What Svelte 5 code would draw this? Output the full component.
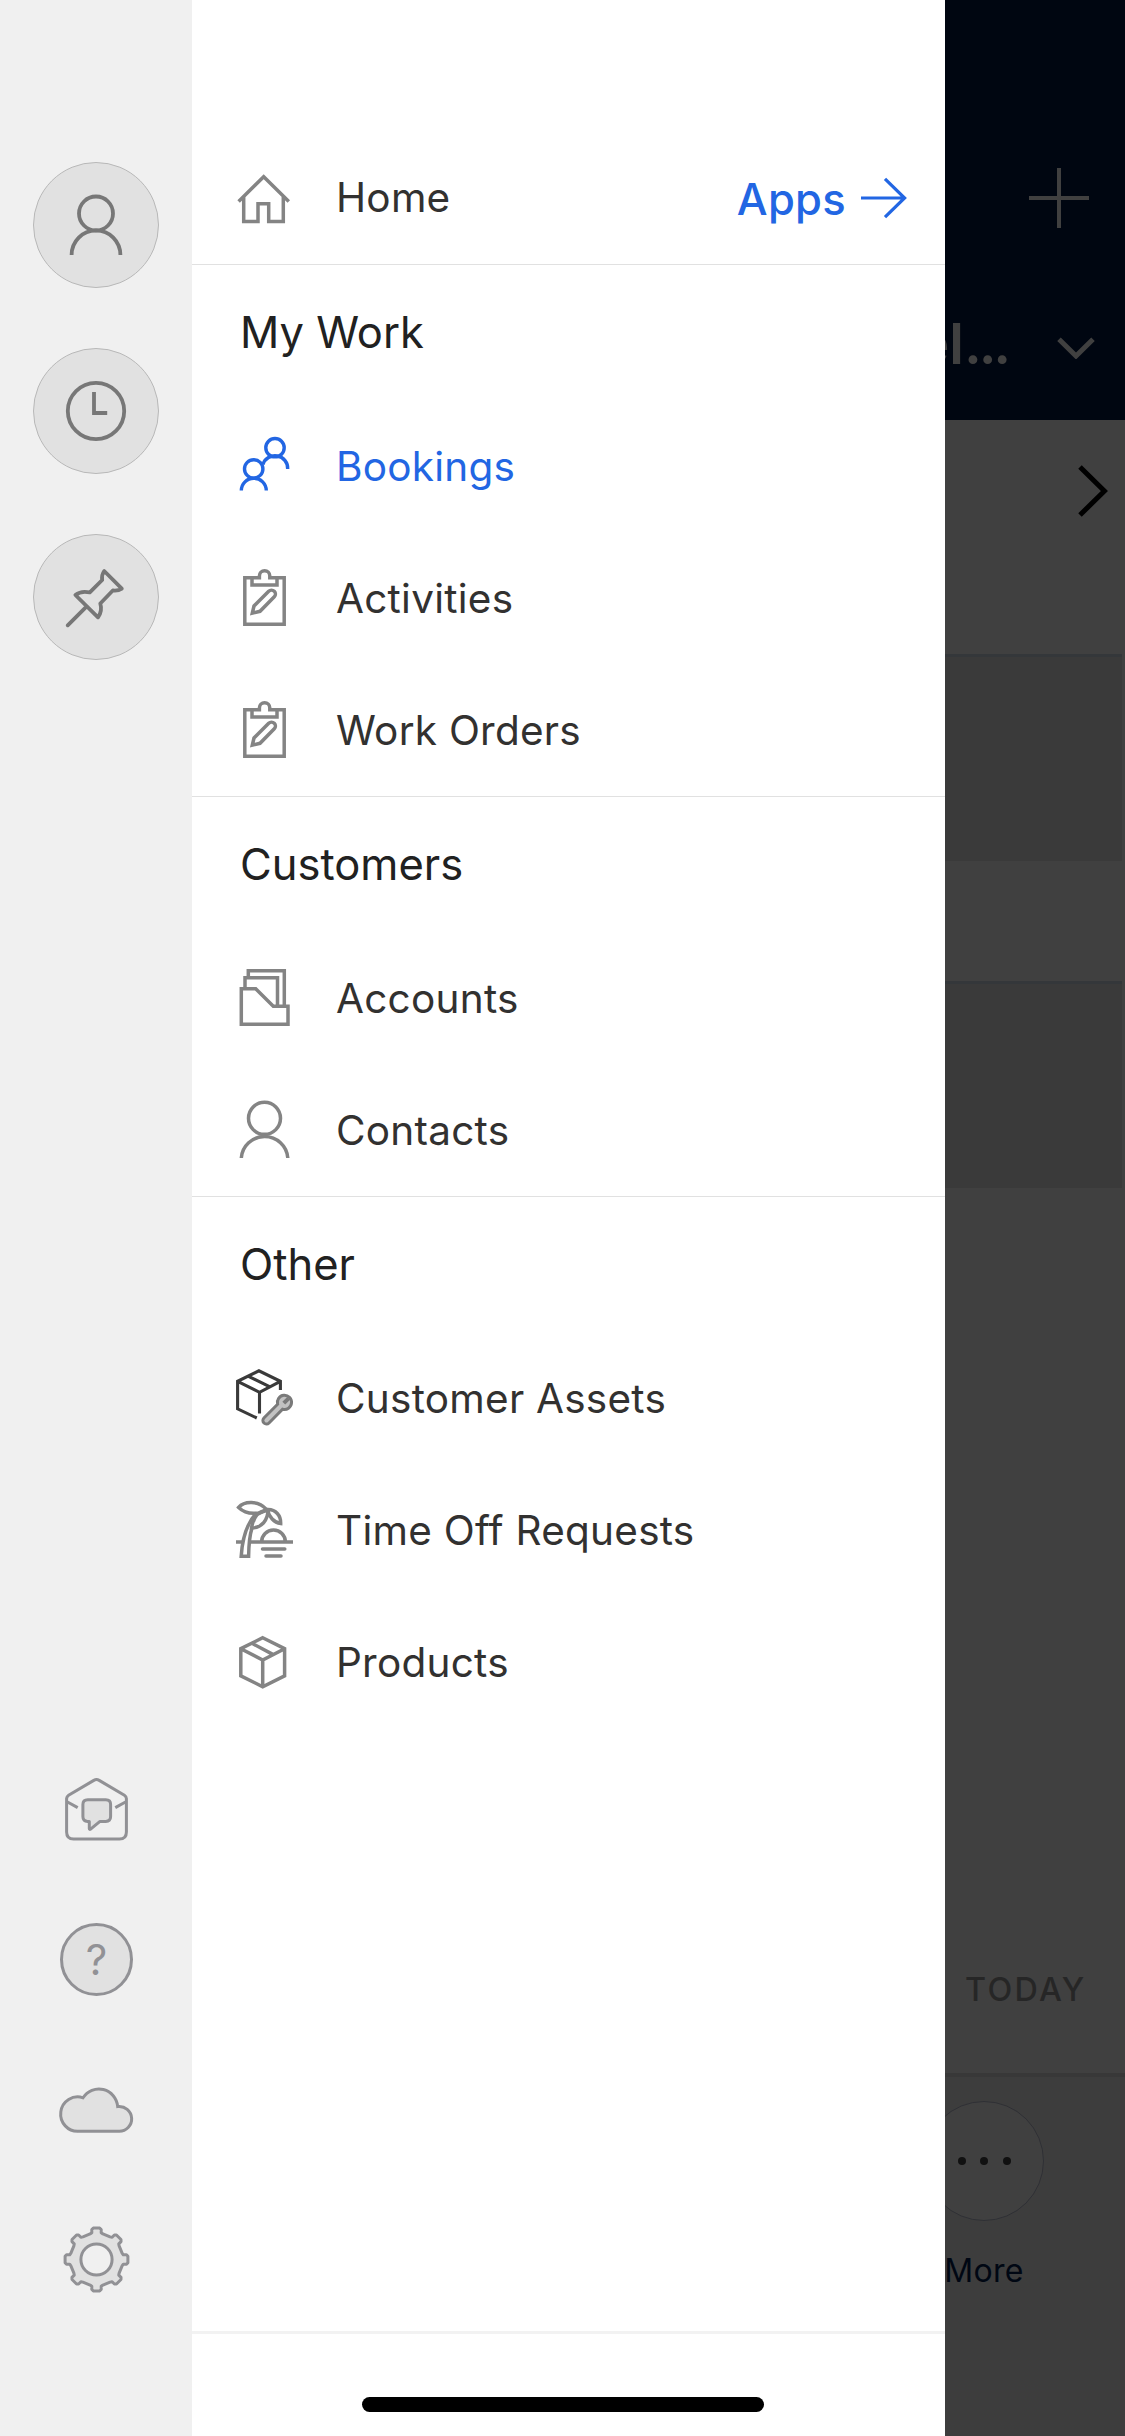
<script>
  const sections = [
    {
      title: 'My Work',
      items: [
        { label: 'Bookings', icon: 'people', active: true },
        { label: 'Activities', icon: 'clipboard' },
        { label: 'Work Orders', icon: 'clipboard' }
      ]
    },
    {
      title: 'Customers',
      items: [
        { label: 'Accounts', icon: 'folder' },
        { label: 'Contacts', icon: 'person' }
      ]
    },
    {
      title: 'Other',
      items: [
        { label: 'Customer Assets', icon: 'asset' },
        { label: 'Time Off Requests', icon: 'palm' },
        { label: 'Products', icon: 'box' }
      ]
    }
  ];

  // Eight-toothed gear outline around the origin.
  const gear = Array.from({ length: 8 }, (_, i) => {
    const a = (i * Math.PI) / 4;
    const pts = [[-6.4, -25.6], [-4.7, -26.8], [-4.7, -30], [-3.2, -31.4], [3.2, -31.4], [4.7, -30], [4.7, -26.8], [6.4, -25.6]];
    return pts.map(([x, y]) =>
      `${(x * Math.cos(a) - y * Math.sin(a)).toFixed(2)} ${(x * Math.sin(a) + y * Math.cos(a)).toFixed(2)}`
    ).join(' L');
  }).join(' L');
</script>

{#snippet icon(name)}
  <svg class="icon" viewBox="0 0 72 72" width="72" height="72">
    {#if name === 'home'}
      <path d="M10.6 39.4 L35.7 14.7 L60.8 39.4 M15.7 35 V59.6 H30 V41.7 H40.7 V59.6 H55.3 V35" />
    {:else if name === 'people'}
      <circle cx="47" cy="16.7" r="9.2" />
      <path d="M59.7 38 A12.7 12.4 0 0 0 34.9 33.5" />
      <circle cx="25.7" cy="37.9" r="9.2" />
      <path d="M13.3 59.6 A12.5 12.4 0 0 1 38.3 59.6" />
    {:else if name === 'clipboard'}
      <path d="M31.2 14.8 H16.8 V61.2 H56.2 V14.8 H41.8 V13 A5.2 5.2 0 0 0 31.4 13 V16.4 M24 14.8 V22 H49 V14.8 M41.8 16.4 V13" />
      <path d="M24.3 50.2 L26 43 L40.7 28.3 A3.6 3.6 0 0 1 46.3 33.8 L32 48.3 Z" />
    {:else if name === 'folder'}
      <path d="M20.3 14 V7.7 H56.3 V43 M17 25.5 V14.8 H49.5 V43 M13.3 25.7 H27.7 L45.3 43.3 H60 V61.3 H13.3 Z" />
    {:else if name === 'person'}
      <circle cx="36.5" cy="23.3" r="16" />
      <path d="M13.3 63 A23.3 23 0 0 1 59.8 63" />
    {:else if name === 'asset'}
      <g class="dark">
        <path d="M28.8 55 L9.6 45.8 V18.3 L30.9 7.8 L52.4 18.3 V27 M9.6 18.3 L31.5 29.3 L52.4 18.3 M31.5 29.3 V50.5 M20.5 13.3 L42 23.9" />
      </g>
      <path class="wrench" d="M49.6 41.2 L35.9 55 A3.5 3.5 0 0 0 41 60 L54.6 46.2 A7.1 7.1 0 1 0 49.6 41.2 Z" />
      <path class="jaw" d="M55.8 40.2 L60.6 35.4" />
    {:else if name === 'palm'}
      <path d="M8 47 H15 M23 47 H65 M33.6 47 A11.9 11.9 0 0 1 57.4 47" />
      <path class="round" d="M34.5 54 H56.8 M38 61 H53" />
      <path d="M10.6 12.4 C16 6 30 5 38.5 14.4 C33 19.6 19 20.4 10.6 12.4 Z" />
      <path d="M39 14.6 C48 14 53 21 52.7 28.6 C46 27.6 41 22 39.6 15" />
      <path d="M40 15 C29 16 25 23 23.6 33 C34 33 40 24.5 40 15 Z" />
      <path d="M28.5 18 C20 27 14.5 40 13.2 61.3 H20.6 C20.8 50 21.4 41 24 33" />
    {:else}
      <path d="M34.7 10.8 L56.6 21.7 V48.9 L34.7 59.7 L12.8 48.9 V21.7 Z M12.8 21.7 L34.7 33 L56.6 21.7 M34.7 33 V59.7 M24 16.3 L44.8 27.4" />
    {/if}
  </svg>
{/snippet}

<div class="screen">
  <aside class="rail">
    <div class="shortcuts">
      <button class="disc" aria-label="Profile">
        <svg viewBox="33 162 126 126">
          <circle cx="96" cy="213.5" r="17" />
          <path d="M71.6 255 A24.4 24.6 0 0 1 120.4 255" />
        </svg>
      </button>
      <button class="disc" aria-label="Recent">
        <svg viewBox="33 348 126 126">
          <circle cx="96" cy="411" r="28.2" />
          <path d="M94 392 V413 H107.2" />
        </svg>
      </button>
      <button class="disc" aria-label="Pinned">
        <svg viewBox="33 534 126 126">
          <path d="M104.2 571 Q101.4 575 102.2 580 L89.8 592.4 Q81 590.4 75.4 595 L98 617.3 Q102.6 611 100.3 603.5 L112.8 590.5 Q118 591.2 121.8 588.6 Z M86.7 606.4 L67.7 625.3" stroke-linejoin="round" stroke-linecap="round" />
        </svg>
      </button>
    </div>
    <div class="tools">
      <svg viewBox="58 1772 76 76">
        <path d="M66.6 1798.5 Q66.8 1796.4 68.6 1795.2 L93.8 1780.4 Q96.5 1778.8 99.2 1780.4 L124.4 1795.2 Q126.3 1796.4 126.4 1798.5 V1832 Q126.4 1839 119.4 1839 H73.6 Q66.6 1839 66.6 1832 Z M67.5 1802 L77.7 1807.6 M125.5 1802 L115.3 1807.6" />
        <path class="tint" stroke-linejoin="round" d="M87.8 1799.8 H105.8 Q110.6 1799.8 110.6 1804.6 V1816.6 Q110.6 1821.4 105.8 1821.4 H100 L90.6 1829.2 Q89.3 1829.8 89.3 1828.4 V1821.4 H87.6 Q82.9 1821.4 82.9 1816.6 V1804.6 Q82.9 1799.8 87.8 1799.8 Z" />
      </svg>
      <div class="help"><span>?</span></div>
      <svg viewBox="58 2072 76 76">
        <path class="tint" d="M78.7 2131.3 A17 17.2 0 1 1 83 2097.8 A18.9 19.4 0 0 1 117.7 2106.6 A12.4 12.4 0 1 1 119 2131.3 Z" />
      </svg>
      <svg viewBox="-38.5 -37.5 76 76">
        <path class="tint" d="M{gear} Z" stroke-linejoin="round" />
        <circle class="hole" r="15.6" />
      </svg>
    </div>
  </aside>

  <main class="drawer">
    <div class="row top">
      {@render icon('home')}
      <span class="label">Home</span>
      <a class="apps" href="#apps">
        <span>Apps</span>
        <svg viewBox="0 0 48 48" width="48" height="48">
          <path d="M2 24 H46 M26 4.8 L45.6 24 L26 43.2" />
        </svg>
      </a>
    </div>
    {#each sections as s}
      <section>
        <h2>{s.title}</h2>
        {#each s.items as item}
          <div class="row" class:active={item.active}>
            {@render icon(item.icon)}
            <span class="label">{item.label}</span>
          </div>
        {/each}
      </section>
    {/each}
    <footer><div class="indicator"></div></footer>
  </main>

  <div class="behind">
    <header>
      <svg class="plus" viewBox="0 0 60 60" width="60" height="60"><path d="M0 30 H60 M30 0 V60" /></svg>
      <div class="title">
        <span class="name">el<span class="ellipsis">...</span></span>
        <svg viewBox="0 0 38 22" width="38" height="22"><path d="M2 2.2 L19 19 L36 2.2" /></svg>
      </div>
    </header>
    <div class="next">
      <svg viewBox="0 0 30 52" width="30" height="52"><path d="M2 2 L26.4 26 L2 50" /></svg>
    </div>
    <div class="slot first"></div>
    <div class="slot second"></div>
    <div class="today">TODAY</div>
    <div class="bar">
      <div class="more">
        <div class="dots"><i></i><i></i><i></i></div>
        <span>More</span>
      </div>
    </div>
  </div>
</div>

<style>
  :global(body) { margin: 0; }
  .screen {
    display: flex; width: 1125px; height: 2436px; overflow: hidden;
    font-family: Inter, "Liberation Sans", sans-serif; background: #fff;
  }
  svg { display: block; fill: none; stroke: currentColor; flex: none; }

  .rail {
    width: 192px; box-sizing: border-box; flex: none; background: #f0f0f0;
    display: flex; flex-direction: column; justify-content: space-between;
    align-items: center; padding: 162px 0 138px;
  }
  .shortcuts { display: flex; flex-direction: column; gap: 60px; }
  .disc {
    width: 126px; height: 126px; border-radius: 50%; padding: 0; box-sizing: border-box;
    border: 1px solid #b8b8b8; background: #e1e1e1; color: #777;
  }
  .disc svg { width: 126px; height: 126px; margin: -1px; stroke-width: 3.8; }
  .tools { display: flex; flex-direction: column; gap: 74px; color: #919195; align-items: center; }
  .tools svg { width: 76px; height: 76px; stroke-width: 3; }
  .tint { fill: #e1e1e1; }
  .hole { fill: #f0f0f0; }
  .help {
    width: 73px; height: 73px; margin: 1px 0 2px 1px; box-sizing: border-box; border: 3px solid #919195;
    border-radius: 50%; background: #e1e1e1; display: flex; align-items: center;
    justify-content: center; font-size: 42px; line-height: 1;
  }

  .drawer { width: 753px; flex: none; display: flex; flex-direction: column; background: #fff; color: #323130; }
  .row { height: 132px; padding-left: 36px; display: flex; align-items: center; box-sizing: border-box; }
  section .row { padding-top: 2px; }
  .top { margin-top: 132px; }
  .icon { color: #848484; stroke-width: 3.5; }
  .active, .active .icon { color: #2266e3; }
  .active .icon { stroke-width: 3.4; }
  .dark { color: #3a3a3a; stroke: #3a3a3a; stroke-width: 3.1; }
  .wrench { fill: #c2c2c2; stroke: #7a7a7a; stroke-width: 3; }
  .jaw { stroke: #7a7a7a; stroke-width: 4; }
  .round { stroke-linecap: round; }
  .label { margin-left: 36px; font-size: 40.5px; line-height: 48px; letter-spacing: 0.25px; white-space: nowrap; }
  .apps {
    margin-left: auto; margin-right: 38px; display: flex; align-items: center; gap: 13px;
    color: #2266e3; text-decoration: none; font-size: 43.5px; font-weight: 500;
    letter-spacing: 0.3px;
  }
  .apps span { padding-top: 1px; }
  .apps svg { stroke-width: 3.2; }
  section { border-top: 1px solid #e1e1e1; }
  h2 {
    margin: 0; height: 135px; padding-left: 48px; font-size: 43.5px; line-height: 135px;
    font-weight: 400; color: #212121;
  }
  footer {
    margin-top: auto; height: 78px; border-top: 3px solid #f2f2f2;
    display: flex; align-items: flex-end; padding: 0 0 24px 170px;
  }
  .indicator { width: 402px; height: 15px; border-radius: 8px; background: #000; }

  .behind { width: 180px; flex: none; background: #404040; overflow: hidden; display: flex; flex-direction: column; }
  header { height: 420px; background: #000611; color: #404040; box-sizing: border-box; padding-top: 168px; }
  .plus { margin-left: 84px; stroke-width: 4; }
  .title { display: flex; align-items: center; justify-content: flex-end; height: 68px; margin-top: 86px; padding-right: 30px; }
  .name { font-size: 56px; font-weight: 600; line-height: 68px; margin: -8px 49px 0 0; white-space: nowrap; }
  .ellipsis { letter-spacing: -3.2px; }
  .title svg { stroke-width: 5; }
  .next { height: 234px; color: #000; display: flex; justify-content: flex-end; padding-right: 17px; box-sizing: border-box; padding-top: 45px; }
  .next svg { stroke-width: 5; }
  .slot { height: 207px; width: 177px; box-sizing: border-box; border-top: 3px solid #34373a; background: #3a3a3a; }
  .second { margin-top: 120px; }
  .today {
    margin-top: auto; height: 103px; padding-left: 20px; font-size: 32.3px; font-weight: 500;
    line-height: 40px; letter-spacing: 2.3px; color: #262626; border-bottom: 4px solid #383838; white-space: nowrap;
  }
  .bar { height: 359px; background: #3d3d3d; }
  .more { width: 120px; margin-left: -21px; padding-top: 24px; display: flex; flex-direction: column; align-items: center; color: #000713; font-size: 32px; }
  .dots {
    width: 120px; height: 120px; box-sizing: border-box; border: 1px solid #2f3035; border-radius: 50%;
    background: #404040; display: flex; align-items: center; justify-content: center; gap: 14.5px;
  }
  .dots i { width: 8px; height: 8px; border-radius: 50%; background: #111; }
  .more span { margin-top: 31px; line-height: 38px; letter-spacing: 0.3px; }
</style>
